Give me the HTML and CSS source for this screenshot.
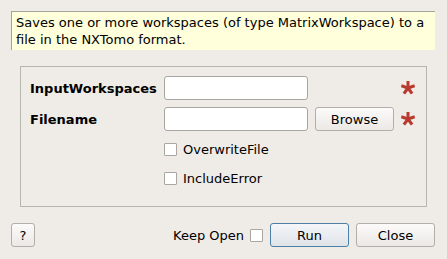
FILE: index.html
```html
<!DOCTYPE html>
<html lang="en">
<head>
  <meta charset="UTF-8" />
  <title>SaveNXTomo</title>
  <link rel="stylesheet" href="styles.css">
</head>
<body>
  <div class="description">
    Saves one or more workspaces (of type MatrixWorkspace) to a file in the NXTomo format.
  </div>

  <div class="group">
    <div class="grid">
      <label class="prop">InputWorkspaces</label>
      <input type="text" class="field" />
      <span></span>
      <svg class="star" width="14" height="14" viewBox="-7 -7 14 14">
        <g stroke="#b83a2e" stroke-width="3" stroke-linecap="butt">
          <line x1="0" y1="0" x2="0" y2="-7" />
          <line x1="0" y1="0" x2="6.7" y2="-2.2" />
          <line x1="0" y1="0" x2="4.1" y2="5.7" />
          <line x1="0" y1="0" x2="-4.1" y2="5.7" />
          <line x1="0" y1="0" x2="-6.7" y2="-2.2" />
        </g>
      </svg>

      <label class="prop">Filename</label>
      <input type="text" class="field" />
      <button class="btn">Browse</button>
      <svg class="star" width="14" height="14" viewBox="-7 -7 14 14">
        <g stroke="#b83a2e" stroke-width="3" stroke-linecap="butt">
          <line x1="0" y1="0" x2="0" y2="-7" />
          <line x1="0" y1="0" x2="6.7" y2="-2.2" />
          <line x1="0" y1="0" x2="4.1" y2="5.7" />
          <line x1="0" y1="0" x2="-4.1" y2="5.7" />
          <line x1="0" y1="0" x2="-6.7" y2="-2.2" />
        </g>
      </svg>

      <span></span>
      <label class="check"><span class="box"></span>OverwriteFile</label>
      <span></span>
      <span></span>

      <span></span>
      <label class="check"><span class="box"></span>IncludeError</label>
      <span></span>
      <span></span>
    </div>
  </div>

  <div class="footer">
    <button class="btn btn-help">?</button>
    <div class="spacer"></div>
    <label class="keep">Keep Open <span class="box"></span></label>
    <button class="btn btn-run">Run</button>
    <button class="btn">Close</button>
  </div>
</body>
</html>
```

FILE: styles.css
```css
* {
  box-sizing: border-box;
  margin: 0;
  padding: 0;
}

body {
  width: 447px;
  height: 259px;
  background-color: #efebe7;
  font-family: "DejaVu Sans", sans-serif;
  font-size: 13px;
  color: #000;
  padding-top: 11px;
}

.description {
  margin: 0 12px 0 11px;
  height: 39px;
  background-color: #ffffdc;
  border-left: 1px solid #a5a19c;
  border-top: 1px solid #a5a19c;
  padding: 2px 4px;
  line-height: 17px;
}

.group {
  margin: 16px 20px 0 20px;
  height: 141px;
  border: 1px solid #b8b4af;
  padding: 9px 0 0 9px;
}

.grid {
  display: grid;
  grid-template-columns: 127px 144px 79px 14px;
  grid-template-rows: 24px 24px 22px 22px;
  column-gap: 7px;
  row-gap: 7px;
  align-items: center;
}

.prop {
  font-weight: bold;
}

.field {
  height: 24px;
  width: 144px;
  border: 1px solid #aaa6a1;
  border-radius: 3px;
  background: #fff;
}

.btn {
  height: 24px;
  border: 1px solid #b2aea9;
  border-radius: 3px;
  background: linear-gradient(#fcfbfa, #ebe8e5);
  font-family: "DejaVu Sans", sans-serif;
  font-size: 13px;
  color: #000;
}

.star {
  display: block;
}

.check {
  display: flex;
  align-items: center;
  gap: 6px;
  white-space: nowrap;
}

.box {
  display: inline-block;
  width: 13px;
  height: 13px;
  border: 1px solid #aba6a1;
  border-radius: 1px;
  background: #fff;
}

.footer {
  display: flex;
  align-items: center;
  margin-top: 16px;
  padding: 0 12px 0 11px;
  gap: 7px;
}

.spacer {
  flex: 1;
}

.btn-help {
  width: 24px;
}

.keep {
  display: flex;
  align-items: center;
  gap: 6px;
}

.btn-run,
.footer .btn:last-child {
  width: 79px;
}

.btn-run {
  border-color: #4c7ea6;
  background: linear-gradient(#f4f6f8, #dfe4e9);
}
```
